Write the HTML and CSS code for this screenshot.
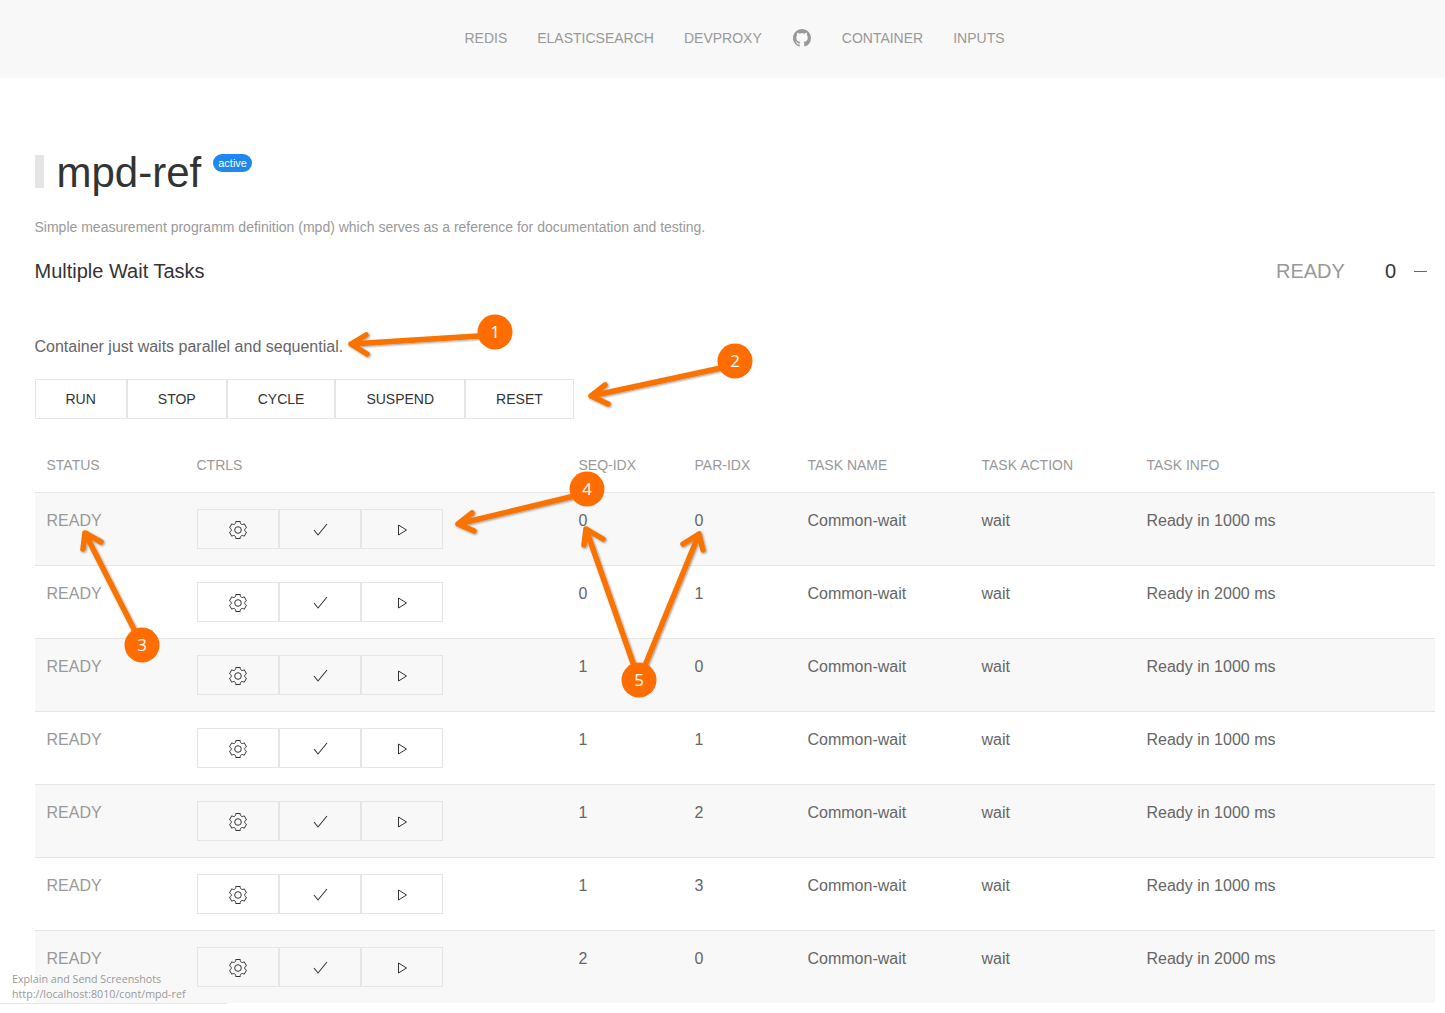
FILE: index.html
```html
<!DOCTYPE html>
<html lang="en">
<head>
    <meta charset="UTF-8">
    <title>mpd-ref</title>
    <link rel="stylesheet" href="styles.css">
</head>
<body>
    <svg class="defs" width="0" height="0">
        <symbol id="i-cog" viewBox="0 0 20 20">
            <circle fill="none" stroke="currentColor" cx="9.997" cy="10" r="3.31"/>
            <path fill="none" stroke="currentColor" d="M18.488,12.285 L16.205,16.237 C15.322,15.496 14.185,15.281 13.303,15.791 C12.428,16.289 12.047,17.373 12.246,18.5 L7.735,18.5 C7.938,17.374 7.553,16.299 6.684,15.791 C5.801,15.27 4.655,15.492 3.773,16.237 L1.5,12.285 C2.573,11.871 3.317,10.999 3.317,9.991 C3.305,8.98 2.573,8.121 1.5,7.716 L3.765,3.784 C4.645,4.516 5.794,4.738 6.687,4.232 C7.555,3.722 7.939,2.637 7.735,1.5 L12.263,1.5 C12.072,2.637 12.441,3.71 13.314,4.22 C14.206,4.73 15.343,4.516 16.225,3.794 L18.487,7.714 C17.404,8.117 16.661,8.988 16.67,10.009 C16.672,11.018 17.415,11.88 18.488,12.285 Z"/>
        </symbol>
        <symbol id="i-check" viewBox="0 0 20 20">
            <polyline fill="none" stroke="currentColor" stroke-width="1.1" points="4,10 8,15 17,4"/>
        </symbol>
        <symbol id="i-play" viewBox="0 0 20 20">
            <polygon fill="none" stroke="currentColor" points="6.5,5 14.5,10 6.5,15"/>
        </symbol>
    </svg>

    <nav class="navbar">
        <a href="#">Redis</a>
        <a href="#">Elasticsearch</a>
        <a href="#">DevProxy</a>
        <a href="#" class="nav-icon">
            <svg width="18" height="18" viewBox="0 0 16 16"><path fill="currentColor" d="M8 0C3.58 0 0 3.58 0 8c0 3.54 2.29 6.53 5.47 7.59.4.07.55-.17.55-.38 0-.19-.01-.82-.01-1.49-2.01.37-2.53-.49-2.69-.94-.09-.23-.48-.94-.82-1.13-.28-.15-.68-.52-.01-.53.63-.01 1.08.58 1.23.82.72 1.21 1.87.87 2.33.66.07-.52.28-.87.51-1.07-1.78-.2-3.64-.89-3.64-3.95 0-.87.31-1.59.82-2.15-.08-.2-.36-1.02.08-2.12 0 0 .67-.21 2.2.82.64-.18 1.32-.27 2-.27s1.36.09 2 .27c1.53-1.04 2.2-.82 2.2-.82.44 1.1.16 1.92.08 2.12.51.56.82 1.27.82 2.15 0 3.07-1.87 3.75-3.65 3.95.29.25.54.73.54 1.48 0 1.07-.01 1.93-.01 2.2 0 .21.15.46.55.38A8.01 8.01 0 0 0 16 8c0-4.42-3.58-8-8-8z"/></svg>
        </a>
        <a href="#">Container</a>
        <a href="#">Inputs</a>
    </nav>

    <main class="content">
        <h1 class="page-title">mpd-ref <span class="badge">active</span></h1>
        <p class="description">Simple measurement programm definition (mpd) which serves as a reference for documentation and testing.</p>

        <div class="task-head">
            <h2 class="task-title">Multiple Wait Tasks</h2>
            <div class="task-state">
                <span class="state-label">READY</span>
                <span class="state-count">0</span>
                <span class="state-toggle"></span>
            </div>
        </div>

        <p class="lead">Container just waits parallel and sequential.</p>

        <div class="btn-row">
            <button class="btn">Run</button>
            <button class="btn">Stop</button>
            <button class="btn">Cycle</button>
            <button class="btn">Suspend</button>
            <button class="btn">Reset</button>
        </div>

        <table class="tasks">
            <colgroup>
                <col class="col-status">
                <col class="col-ctrls">
                <col class="col-seq">
                <col class="col-par">
                <col class="col-name">
                <col class="col-action">
                <col>
            </colgroup>
            <thead>
                <tr><th>Status</th><th>Ctrls</th><th>Seq-Idx</th><th>Par-Idx</th><th>Task Name</th><th>Task Action</th><th>Task Info</th></tr>
            </thead>
            <tbody>
                <tr>
                    <td class="status">READY</td>
                    <td><div class="ctrls"><button class="ctrl"><svg width="20" height="20"><use href="#i-cog"/></svg></button><button class="ctrl"><svg width="20" height="20"><use href="#i-check"/></svg></button><button class="ctrl"><svg width="20" height="20"><use href="#i-play"/></svg></button></div></td>
                    <td>0</td><td>0</td><td>Common-wait</td><td>wait</td><td>Ready in 1000 ms</td>
                </tr>
                <tr>
                    <td class="status">READY</td>
                    <td><div class="ctrls"><button class="ctrl"><svg width="20" height="20"><use href="#i-cog"/></svg></button><button class="ctrl"><svg width="20" height="20"><use href="#i-check"/></svg></button><button class="ctrl"><svg width="20" height="20"><use href="#i-play"/></svg></button></div></td>
                    <td>0</td><td>1</td><td>Common-wait</td><td>wait</td><td>Ready in 2000 ms</td>
                </tr>
                <tr>
                    <td class="status">READY</td>
                    <td><div class="ctrls"><button class="ctrl"><svg width="20" height="20"><use href="#i-cog"/></svg></button><button class="ctrl"><svg width="20" height="20"><use href="#i-check"/></svg></button><button class="ctrl"><svg width="20" height="20"><use href="#i-play"/></svg></button></div></td>
                    <td>1</td><td>0</td><td>Common-wait</td><td>wait</td><td>Ready in 1000 ms</td>
                </tr>
                <tr>
                    <td class="status">READY</td>
                    <td><div class="ctrls"><button class="ctrl"><svg width="20" height="20"><use href="#i-cog"/></svg></button><button class="ctrl"><svg width="20" height="20"><use href="#i-check"/></svg></button><button class="ctrl"><svg width="20" height="20"><use href="#i-play"/></svg></button></div></td>
                    <td>1</td><td>1</td><td>Common-wait</td><td>wait</td><td>Ready in 1000 ms</td>
                </tr>
                <tr>
                    <td class="status">READY</td>
                    <td><div class="ctrls"><button class="ctrl"><svg width="20" height="20"><use href="#i-cog"/></svg></button><button class="ctrl"><svg width="20" height="20"><use href="#i-check"/></svg></button><button class="ctrl"><svg width="20" height="20"><use href="#i-play"/></svg></button></div></td>
                    <td>1</td><td>2</td><td>Common-wait</td><td>wait</td><td>Ready in 1000 ms</td>
                </tr>
                <tr>
                    <td class="status">READY</td>
                    <td><div class="ctrls"><button class="ctrl"><svg width="20" height="20"><use href="#i-cog"/></svg></button><button class="ctrl"><svg width="20" height="20"><use href="#i-check"/></svg></button><button class="ctrl"><svg width="20" height="20"><use href="#i-play"/></svg></button></div></td>
                    <td>1</td><td>3</td><td>Common-wait</td><td>wait</td><td>Ready in 1000 ms</td>
                </tr>
                <tr>
                    <td class="status">READY</td>
                    <td><div class="ctrls"><button class="ctrl"><svg width="20" height="20"><use href="#i-cog"/></svg></button><button class="ctrl"><svg width="20" height="20"><use href="#i-check"/></svg></button><button class="ctrl"><svg width="20" height="20"><use href="#i-play"/></svg></button></div></td>
                    <td>2</td><td>0</td><td>Common-wait</td><td>wait</td><td>Ready in 2000 ms</td>
                </tr>
            </tbody>
        </table>
    </main>

    <!-- annotations drawn on top of the screenshot -->
    <svg class="notes" width="1445" height="1013" viewBox="0 0 1445 1013">
        <defs>
            <filter id="drop" x="-10%" y="-10%" width="120%" height="120%">
                <feDropShadow dx="1" dy="1" stdDeviation="0.8" flood-color="#000" flood-opacity="0.4"/>
            </filter>
        </defs>
        <g class="arrow" filter="url(#drop)">
            <path d="M495 335 L351 344 M366 335 L351 344 L367 354"/>
            <path d="M735 365 L591 396 M605 385 L591 396 L608 404"/>
            <path d="M142 645 L85 533 M83 549 L85 533 L101 542"/>
            <path d="M587 493 L458 524 M472 513 L458 524 L474 531"/>
            <path d="M639 680 L586 529 M584 545 L586 529 L603 539"/>
            <path d="M639 680 L699 534 M683 544 L699 534 L703 550"/>
        </g>
        <g class="dot">
            <circle cx="495" cy="332" r="17.5"/>
            <circle cx="735" cy="361" r="17.5"/>
            <circle cx="142" cy="645" r="17.5"/>
            <circle cx="587" cy="489" r="17.5"/>
            <circle cx="639" cy="680" r="17.5"/>
        </g>
        <g class="dot-num">
            <text x="495" y="338">1</text>
            <text x="735" y="367">2</text>
            <text x="142" y="651">3</text>
            <text x="587" y="495">4</text>
            <text x="639" y="686">5</text>
        </g>
    </svg>

    <div class="caption">
        <div>Explain and Send Screenshots</div>
        <div>http://localhost:8010/cont/mpd-ref</div>
    </div>
</body>
</html>
```

FILE: styles.css
```css
* {
    box-sizing: border-box;
}
html, body {
    margin: 0;
    padding: 0;
}
body {
    position: relative;
    width: 1445px;
    height: 1013px;
    overflow: hidden;
    background: #fff;
    color: #666;
    font-family: "Liberation Sans", Arial, sans-serif;
    font-size: 16px;
    line-height: 24px;
}
.defs {
    position: absolute;
}

/* navbar */
.navbar {
    display: flex;
    justify-content: center;
    align-items: center;
    gap: 30px;
    height: 78px;
    padding: 0 0 2px 24px;
    background: #f8f8f8;
}
.navbar a {
    color: #999;
    font-size: 14px;
    text-decoration: none;
    text-transform: uppercase;
}
.nav-icon {
    display: flex;
    justify-content: center;
    width: 20px;
}

/* head */
.content {
    padding: 0 10px 0 34.5px;
}
.page-title {
    display: flex;
    align-items: flex-start;
    height: 33px;
    margin: 77px 0 0;
    padding-left: 13px;
    border-left: 9.5px solid #e5e5e5;
    color: #333;
    font-size: 42px;
    font-weight: 400;
    line-height: 35px;
}
.badge {
    height: 18px;
    margin: -1px 0 0 11.5px;
    padding: 0 5.5px;
    border-radius: 9px;
    background: #1e87f0;
    color: #fff;
    font-size: 11px;
    line-height: 18px;
}
.description {
    margin: 29px 0 0;
    color: #999;
    font-size: 14px;
    line-height: 20px;
}
.task-head {
    display: flex;
    justify-content: space-between;
    align-items: center;
    margin-top: 19px;
    height: 30px;
}
.task-title {
    margin: 0;
    color: #333;
    font-size: 20px;
    font-weight: 400;
}
.task-state {
    display: flex;
    align-items: center;
    padding-right: 8px;
    font-size: 20px;
}
.state-label {
    color: #999;
}
.state-count {
    margin-left: 40px;
    color: #333;
}
.state-toggle {
    width: 13px;
    height: 1px;
    margin-left: 18px;
    background: #666;
}
.lead {
    margin: 49px 0 0;
}

/* buttons */
.btn-row {
    display: flex;
    margin-top: 20px;
}
.btn {
    height: 40px;
    padding: 0 30px;
    border: 1px solid #e5e5e5;
    background: #fff;
    color: #333;
    font-family: inherit;
    font-size: 14px;
    text-transform: uppercase;
}

/* table */
.tasks {
    width: 1400.5px;
    margin-top: 21px;
    border-collapse: collapse;
    table-layout: fixed;
}
.col-status { width: 150px; }
.col-ctrls { width: 382px; }
.col-seq { width: 116px; }
.col-par { width: 113px; }
.col-name { width: 174px; }
.col-action { width: 165px; }
.tasks th {
    height: 52px;
    padding: 0 12px 2px;
    color: #999;
    font-size: 14px;
    font-weight: 400;
    text-align: left;
    text-transform: uppercase;
}
.tasks td {
    height: 73px;
    padding: 18px 12px 16px;
    vertical-align: top;
    border-top: 1px solid #e5e5e5;
    line-height: 20px;
}
.tasks tbody tr:nth-child(odd) {
    background: #f8f8f8;
}
.tasks td.status {
    color: #999;
}
.ctrls {
    display: flex;
    margin-top: -2px;
}
.ctrl {
    display: flex;
    justify-content: center;
    align-items: center;
    width: 82px;
    height: 40px;
    padding: 2px 0 0;
    border: 1px solid #e5e5e5;
    background: transparent;
    color: #333;
}

/* overlays */
.notes {
    position: absolute;
    top: 0;
    left: 0;
}
.arrow path {
    fill: none;
    stroke: #f97306;
    stroke-width: 5.5;
    stroke-linecap: round;
    stroke-linejoin: round;
}
.dot circle {
    fill: #ff6d00;
}
.dot-num text {
    fill: #fff;
    font-family: "Open Sans", sans-serif;
    font-size: 17px;
    text-anchor: middle;
}
.caption {
    position: absolute;
    top: 972px;
    left: 0;
    width: 227px;
    height: 32px;
    padding-left: 12px;
    border-bottom: 1px solid #e5e5e5;
    color: #999;
    font-family: "Open Sans", sans-serif;
    font-size: 10.7px;
    line-height: 15px;
    white-space: nowrap;
}
```
